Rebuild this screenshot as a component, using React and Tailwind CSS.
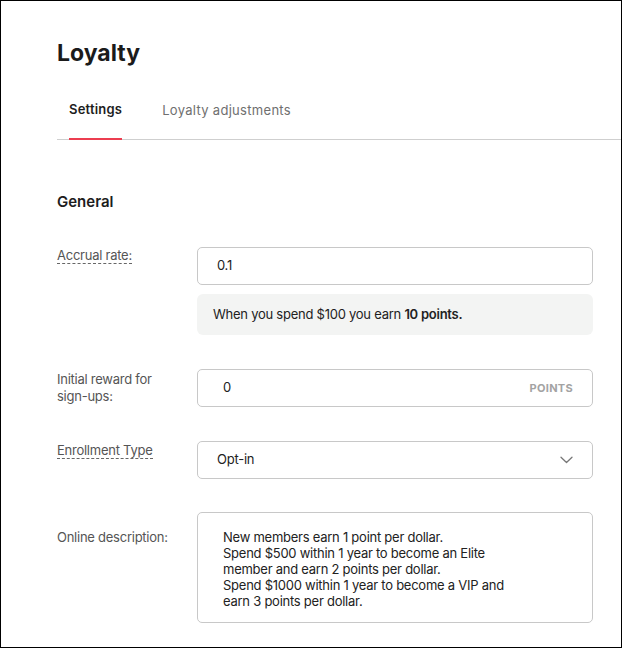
function Label({ children, dashed, className = "" }) {
  return (
    <div className={`text-[13px] leading-[17px] text-[#555] ${className}`}>
      {dashed ? (
        <span className="border-b border-dashed border-[#666]">{children}</span>
      ) : (
        children
      )}
    </div>
  );
}

export default function App() {
  return (
    <div
      className="w-[622px] h-[648px] border border-black bg-white overflow-hidden pl-[56px]"
      style={{ fontFamily: "Inter, 'Noto Sans', sans-serif" }}
    >
      <h1 className="mt-[38px] text-[23px] leading-[28px] font-bold text-[#1b1b1b]">
        Loyalty
      </h1>

      <div className="mt-[32px] flex gap-[40px] pl-[12px] border-b border-[#cfcfcf]">
        <button className="pb-[19px] border-b-2 border-[#ec3e50] -mb-px text-[13px] leading-5 font-semibold text-[#1d1d1d] tracking-[0.2px]">
          Settings
        </button>
        <button className="pb-[19px] text-[13px] leading-5 text-[#6f6f6f] tracking-[0.3px]">
          Loyalty adjustments
        </button>
      </div>

      <div className="w-[536px]">
        <h2 className="mt-[52px] text-[15px] leading-5 font-semibold text-[#1d1d1d]">
          General
        </h2>

        <div className="mt-[35px] grid grid-cols-[140px_1fr] text-[13px] text-[#222] tracking-[-0.25px]">
          <Label dashed>Accrual rate:</Label>
          <div>
            <div className="h-[38px] border border-[#c8c8c8] rounded-[5px] flex items-center pl-[19px]">
              0.1
            </div>
            <div className="mt-[9px] h-[41px] bg-[#f3f4f3] rounded-[6px] flex items-center pl-[16px]">
              When you spend $100 you earn&nbsp;<span className="font-semibold">10 points.</span>
            </div>
          </div>

          <Label className="mt-[36px]">
            Initial reward for
            <br />
            sign-ups:
          </Label>
          <div className="mt-[34px] h-[38px] border border-[#c8c8c8] rounded-[5px] flex items-center justify-between pl-[25px] pr-[19px]">
            <span>0</span>
            <span className="text-[11px] font-bold tracking-[0.3px] text-[#a3a3a3]">POINTS</span>
          </div>

          <Label dashed className="mt-[35px]">
            Enrollment Type
          </Label>
          <div className="mt-[34px] h-[38px] border border-[#c8c8c8] rounded-[5px] flex items-center justify-between pl-[19px] pr-[19px]">
            <span>Opt-in</span>
            <svg width="13" height="8" viewBox="0 0 13 8" fill="none">
              <path d="M1 1.2l5.5 5.3 5.5-5.3" stroke="#777" strokeWidth="1.3" strokeLinecap="round" strokeLinejoin="round" />
            </svg>
          </div>

          <Label className="mt-[50px]">Online description:</Label>
          <div className="mt-[33px] h-[111px] border border-[#c8c8c8] rounded-[5px] pl-[25px] pt-[16px] leading-[16px]">
            New members earn 1 point per dollar.
            <br />
            Spend $500 within 1 year to become an Elite
            <br />
            member and earn 2 points per dollar.
            <br />
            Spend $1000 within 1 year to become a VIP and
            <br />
            earn 3 points per dollar.
          </div>
        </div>
      </div>
    </div>
  );
}
